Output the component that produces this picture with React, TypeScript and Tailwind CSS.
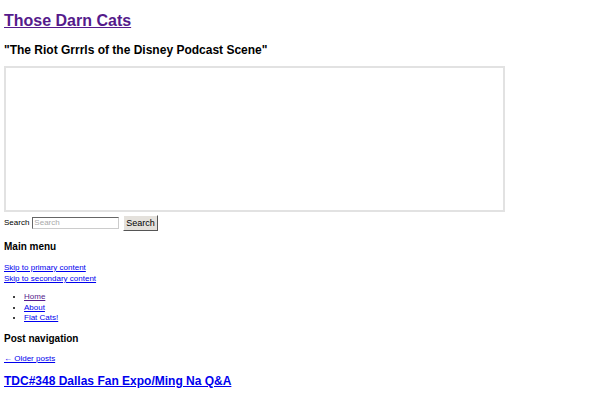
import React from 'react';

const menu = [
  { label: 'Home', visited: true },
  { label: 'About', visited: false },
  { label: 'Flat Cats!', visited: false },
];

export default function App() {
  return (
    <div className="min-h-screen bg-white font-['Liberation_Sans',Arial,sans-serif] text-black px-1">
      {/* Site header */}
      <h1 className="pt-[11px] text-[16px] leading-[20px] font-bold">
        <a href="#" className="text-[#551a8b] underline">Those Darn Cats</a>
      </h1>
      <h2 className="mt-[11px] text-[12px] leading-[16px] font-bold">"The Riot Grrrls of the Disney Podcast Scene"</h2>

      {/* embedded player placeholder */}
      <div className="mt-[8px] w-[501px] h-[146px] border-2 border-[#e2e2e2]" />

      {/* Search */}
      <form className="mt-[3px] flex items-center h-[16px] text-[8px]">
        <label className="mr-[3px]">Search</label>
        <input
          type="text"
          placeholder="Search"
          className="w-[87px] h-[12px] px-[1px] border border-t-[#666] border-l-[#666] border-r-[#ccc] border-b-[#ccc] text-[8px] placeholder:text-[#aaa] outline-none"
        />
        <button
          type="button"
          className="ml-[4px] h-[16px] px-[2px] bg-[#e4e1dc] border border-t-[#fff] border-l-[#fff] border-r-[#555] border-b-[#555] text-[9px] leading-none"
        >
          Search
        </button>
      </form>

      {/* Main menu */}
      <nav>
        <h3 className="mt-[9px] text-[10px] leading-[13px] font-bold">Main menu</h3>
        <div className="mt-[9px] text-[8px] leading-[11px]">
          <a href="#" className="block w-fit text-[#0000ee] underline">Skip to primary content</a>
          <a href="#" className="block w-fit text-[#0000ee] underline">Skip to secondary content</a>
        </div>
        <ul className="mt-[8px] ml-[20px] list-disc text-[8px] leading-[10.5px]">
          {menu.map(item => (
            <li key={item.label}>
              <a href="#" className={item.visited ? 'text-[#551a8b] underline' : 'text-[#0000ee] underline'}>
                {item.label}
              </a>
            </li>
          ))}
        </ul>
      </nav>

      {/* Post navigation */}
      <h3 className="mt-[8px] text-[10px] leading-[13px] font-bold">Post navigation</h3>
      <a href="#" className="block w-fit mt-[8px] text-[8px] leading-[11px] text-[#0000ee] underline">← Older posts</a>

      <h2 className="mt-[9px] text-[12px] leading-[16px] font-bold">
        <a href="#" className="text-[#0000ee] underline">TDC#348 Dallas Fan Expo/Ming Na Q&amp;A</a>
      </h2>
    </div>
  );
}
